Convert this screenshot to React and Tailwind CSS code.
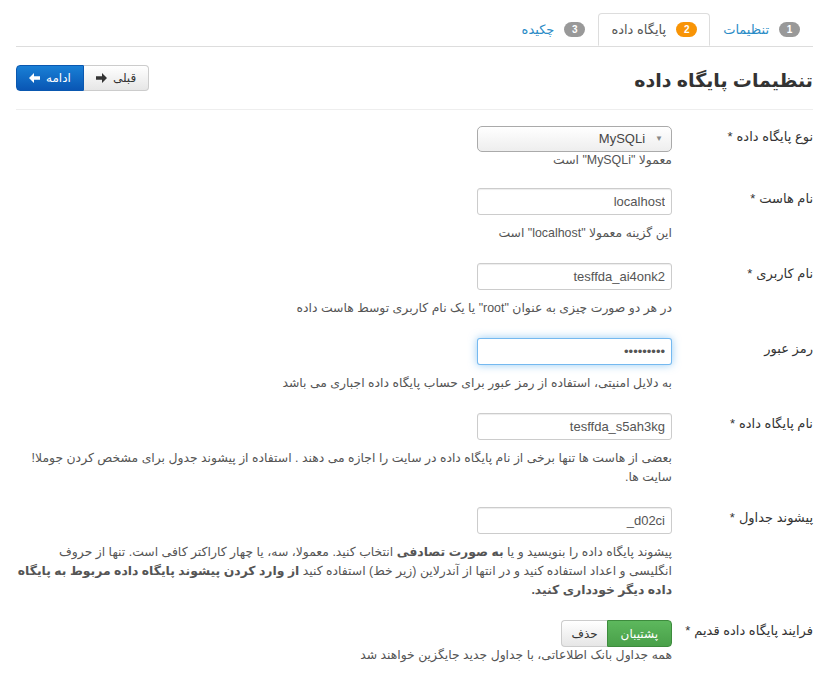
import React from 'react';

const font = { fontFamily: '"Liberation Sans", "DejaVu Sans", sans-serif' };

function Arrow({ dir = 'left', className = '' }) {
  const d = dir === 'left'
    ? 'M0 5 L5 0 L5 3.2 L11 3.2 L11 6.8 L5 6.8 L5 10 Z'
    : 'M11 5 L6 0 L6 3.2 L0 3.2 L0 6.8 L6 6.8 L6 10 Z';
  return (
    <svg width="11" height="10" viewBox="0 0 11 10" className={className}>
      <path d={d} fill="currentColor" />
    </svg>
  );
}

function Badge({ n, active }) {
  return (
    <span
      className={`inline-flex items-center justify-center rounded-full text-[10px] font-bold text-white w-[21px] h-[15px] ${
        active ? 'bg-[#f89406]' : 'bg-[#999]'
      }`}
    >
      {n}
    </span>
  );
}

function Tab({ n, label, active }) {
  if (active) {
    return (
      <li className="-mb-px">
        <div className="flex items-center gap-[10px] h-[33px] px-[12px] border border-[#ddd] border-b-white rounded-t-[4px] bg-white text-[13px] text-[#555]">
          <Badge n={n} active />
          <span>{label}</span>
        </div>
      </li>
    );
  }
  return (
    <li>
      <div className="flex items-center gap-[10px] h-[33px] px-[13px] text-[13px] text-[#2a8bc6]">
        <Badge n={n} />
        <span>{label}</span>
      </div>
    </li>
  );
}

function Row({ label, required, children }) {
  return (
    <div className="flex mb-[20px]">
      <label className="w-[141px] shrink-0 pt-[2px] text-[13px] leading-[18px] text-[#333]">
        {label}
        {required && <span className="mr-1">*</span>}
      </label>
      <div className="flex-1">{children}</div>
    </div>
  );
}

function Input({ value, focused, password }) {
  return (
    <input
      readOnly
      dir="ltr"
      type={password ? 'password' : 'text'}
      value={value}
      className={`block w-[195px] h-[27px] px-[6px] rounded-[3px] border bg-white text-right text-[13px] text-[#555] outline-none ${
        focused
          ? 'border-[rgba(82,168,236,0.8)] shadow-[0_0_8px_rgba(82,168,236,0.6)]'
          : 'border-[#ccc] shadow-[inset_0_1px_1px_rgba(0,0,0,0.075)]'
      }`}
      style={font}
    />
  );
}

function Help({ children, tight }) {
  return (
    <p className={`text-[12.4px] text-[#555] ${tight ? 'leading-[16px]' : 'mt-[9px] leading-[19px]'}`}>
      {children}
    </p>
  );
}

export default function App() {
  return (
    <div dir="rtl" className="min-h-screen bg-white pr-[24px] pl-[16px] pt-[13px] text-[#333]" style={font}>
      <ul className="flex border-b border-[#ddd]">
        <Tab n="1" label="تنظیمات" />
        <Tab n="2" label="پایگاه داده" active />
        <Tab n="3" label="چکیده" />
      </ul>

      <div className="flex items-start justify-between pt-[18px] pb-[14px] border-b border-[#eee]">
        <h3 className="mt-[2px] text-[19px] font-bold leading-[28px] text-[#333]">تنظیمات پایگاه داده</h3>
        <div className="flex">
          <button className="flex items-center gap-[6px] h-[26px] px-[12px] text-[12px] text-[#333] border border-[#ccc] border-l-0 rounded-r-[4px] bg-gradient-to-b from-white to-[#e6e6e6]">
            <span>قبلی</span>
            <Arrow dir="right" />
          </button>
          <button className="flex items-center gap-[6px] h-[26px] px-[12px] text-[12px] text-white border border-[#0a58b0] rounded-l-[4px] bg-gradient-to-b from-[#1a80d6] to-[#0a56b4]">
            <span>ادامه</span>
            <Arrow dir="left" />
          </button>
        </div>
      </div>

      <div className="pt-[16px]">
        <Row label="نوع پایگاه داده" required>
          <div className="flex items-center gap-[10px] w-[195px] h-[26px] px-[8px] rounded-[5px] border border-[#aaa] bg-gradient-to-b from-white to-[#eee] text-[13px] text-[#444]">
            <span className="text-[8px] text-[#888]">▼</span>
            <span>MySQLi</span>
          </div>
          <Help tight>معمولا "MySQLi" است</Help>
        </Row>

        <Row label="نام هاست" required>
          <Input value="localhost" />
          <Help>این گزینه معمولا "localhost" است</Help>
        </Row>

        <Row label="نام کاربری" required>
          <Input value="tesffda_ai4onk2" />
          <Help>در هر دو صورت چیزی به عنوان "root" یا یک نام کاربری توسط هاست داده</Help>
        </Row>

        <Row label="رمز عبور">
          <Input value="123456789" password focused />
          <Help>به دلایل امنیتی، استفاده از رمز عبور برای حساب پایگاه داده اجباری می باشد</Help>
        </Row>

        <Row label="نام پایگاه داده" required>
          <Input value="tesffda_s5ah3kg" />
          <Help>
            بعضی از هاست ها تنها برخی از نام پایگاه داده در سایت را اجازه می دهند . استفاده از پیشوند جدول برای مشخص کردن جوملا! سایت ها.
          </Help>
        </Row>

        <Row label="پیشوند جداول" required>
          <Input value="_d02ci" />
          <Help>
            پیشوند پایگاه داده را بنویسید و یا <b>به صورت تصادفی</b> انتخاب کنید. معمولا، سه، یا چهار کاراکتر کافی است. تنها از حروف انگلیسی و اعداد استفاده کنید و در انتها از آندرلاین (زیر خط) استفاده کنید <b>از وارد کردن پیشوند پایگاه داده مربوط به پایگاه داده دیگر خودداری کنید.</b>
          </Help>
        </Row>

        <Row label="فرایند پایگاه داده قدیم" required>
          <div className="flex h-[27px]">
            <button className="px-[13px] text-[12px] text-white rounded-r-[4px] border border-[#3d8b3d] bg-gradient-to-b from-[#5db85d] to-[#49a049]">
              پشتیبان
            </button>
            <button className="px-[9px] text-[12px] text-[#333] rounded-l-[4px] border border-[#ccc] border-r-0 bg-gradient-to-b from-white to-[#e6e6e6]">
              حذف
            </button>
          </div>
          <Help tight>همه جداول بانک اطلاعاتی، با جداول جدید جایگزین خواهند شد</Help>
        </Row>
      </div>
    </div>
  );
}
